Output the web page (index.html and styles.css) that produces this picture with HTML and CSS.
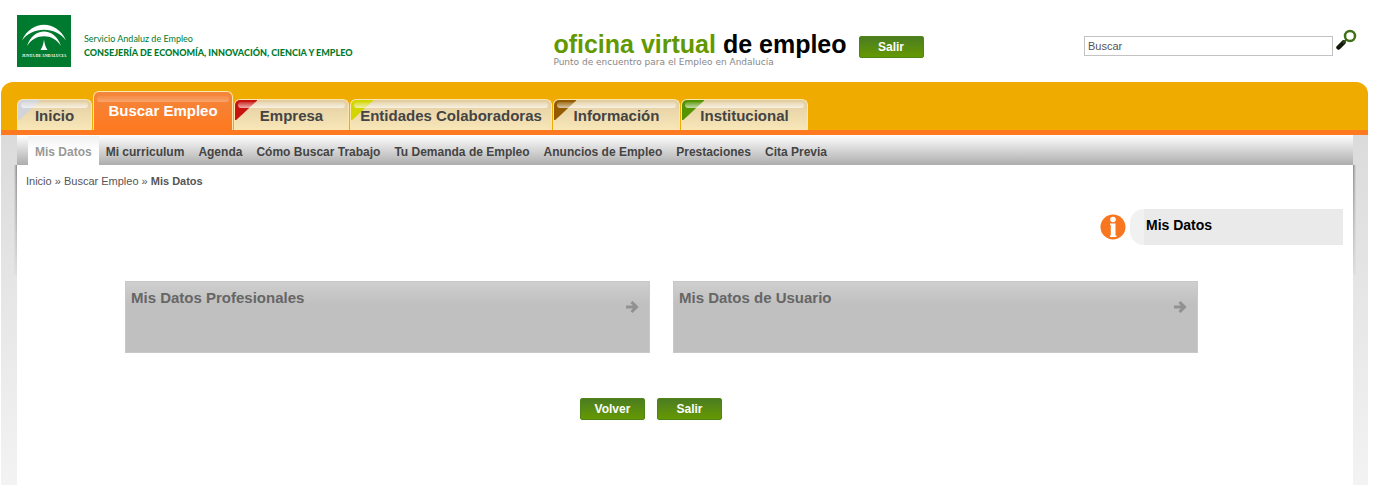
FILE: index.html
```html
<!DOCTYPE html>
<html lang="es">
<head>
  <meta charset="UTF-8" />
  <meta name="viewport" content="width=device-width, initial-scale=1.0"/>
  <title>Mis Datos - Oficina Virtual de Empleo</title>
  <link rel="stylesheet" href="styles.css">
</head>
<body>
  <!-- Header -->
  <header class="header">
    <a href="#" class="brand">
      <svg class="brand-logo" width="54" height="52" viewBox="0 0 54 52" aria-hidden="true">
        <rect width="54" height="52" fill="#007a2e"/>
        <path d="M5 25.500C14 4.500 40 4.500 49 25.500C39 11 15 11 5 25.500Z" fill="#fff"/>
        <path d="M10 31C16 11.500 38 11.500 44 31C36 18 18 18 10 31Z" fill="#fff"/>
        <path d="M27 24.500C27.500 29 28.500 32 30.500 35H23.500C25.500 32 26.500 29 27 24.500Z" fill="#fff"/>
        <text x="27" y="42" text-anchor="middle" class="brand-logo-text">JUNTA DE ANDALUCIA</text>
      </svg>
      <span class="brand-text">
        <span>Servicio Andaluz de Empleo</span>
        <strong>CONSEJERÍA DE ECONOMÍA, INNOVACIÓN, CIENCIA Y EMPLEO</strong>
      </span>
    </a>
    <div class="office">
      <div class="office-name">
        <h1><span>oficina virtual</span> de empleo</h1>
        <p>Punto de encuentro para el Empleo en Andalucía</p>
      </div>
      <button type="button" class="btn">Salir</button>
    </div>
    <form class="search">
      <input type="text" id="buscar" aria-label="Buscar" value="Buscar" />
      <button type="button" class="search-btn" aria-label="Buscar">
        <svg width="22" height="22" viewBox="0 0 22 22">
          <path d="M2.500 18.500L7.500 13.500" stroke="#111a08" stroke-width="4.500" stroke-linecap="round"/>
          <path d="M7 14L10.500 10.500" stroke="#33491c" stroke-width="2"/>
          <circle cx="14" cy="7" r="5" fill="#fff" stroke="#41701a" stroke-width="2.500"/>
        </svg>
      </button>
    </form>
  </header>

  <!-- Main tabs -->
  <nav class="tabs">
    <a href="#" class="tab tab-inicio">Inicio</a>
    <a href="#" class="tab tab-active">Buscar Empleo</a>
    <a href="#" class="tab tab-empresa">Empresa</a>
    <a href="#" class="tab tab-entidades">Entidades Colaboradoras</a>
    <a href="#" class="tab tab-informacion">Información</a>
    <a href="#" class="tab tab-institucional">Institucional</a>
  </nav>

  <div class="wrapper">
    <nav class="submenu">
      <a href="#" class="current">Mis Datos</a>
      <a href="#">Mi curriculum</a>
      <a href="#">Agenda</a>
      <a href="#">Cómo Buscar Trabajo</a>
      <a href="#">Tu Demanda de Empleo</a>
      <a href="#">Anuncios de Empleo</a>
      <a href="#">Prestaciones</a>
      <a href="#">Cita Previa</a>
    </nav>

    <!-- Content -->
    <main class="content">
      <p class="breadcrumb"><a href="#">Inicio</a> » <a href="#">Buscar Empleo</a> » <strong>Mis Datos</strong></p>

      <div class="page-title">
        <svg width="26" height="26" viewBox="0 0 26 26" aria-hidden="true">
          <circle cx="13" cy="13" r="12.500" fill="#f8761f"/>
          <circle cx="13" cy="5.500" r="2.800" fill="#fff"/>
          <path d="M10 9.500H15.500V21.500H16.500V23H10V21.500H10.800V11H10Z" fill="#fff"/>
        </svg>
        <h2>Mis Datos</h2>
      </div>

      <div class="panel">
        <div class="cards">
          <a href="#" class="card">
            <h3>Mis Datos Profesionales</h3>
            <svg width="14" height="14" viewBox="0 0 14 14" aria-hidden="true"><path d="M1 7H11M6.500 2L11.500 7L6.500 12"/></svg>
          </a>
          <a href="#" class="card">
            <h3>Mis Datos de Usuario</h3>
            <svg width="14" height="14" viewBox="0 0 14 14" aria-hidden="true"><path d="M1 7H11M6.500 2L11.500 7L6.500 12"/></svg>
          </a>
        </div>
        <div class="actions">
          <button type="button" class="btn">Volver</button>
          <button type="button" class="btn">Salir</button>
        </div>
      </div>
    </main>
  </div>
</body>
</html>
```
FILE: styles.css
```css
* {
  box-sizing: border-box;
}

body {
  margin: 0;
  padding: 0 14px 0 1px;
  min-height: 100vh;
  display: flex;
  flex-direction: column;
  font-family: "Liberation Sans", Arial, sans-serif;
  font-size: 11px;
  color: #555;
  background: #fff;
}

h1, h2, h3, p {
  margin: 0;
}

a {
  color: inherit;
  text-decoration: none;
}

/* Header */
.header {
  display: grid;
  grid-template-columns: 40% 1fr auto;
  align-items: start;
  height: 82px;
  padding: 15px 10px 0 16px;
}

.brand {
  display: flex;
  gap: 13px;
  color: #007a2e;
}

.brand-logo-text {
  font-family: "Liberation Serif", serif;
  font-size: 4px;
  font-weight: bold;
  fill: #fff;
}

.brand-text {
  display: flex;
  flex-direction: column;
  padding-top: 17px;
  font-family: Lato, sans-serif;
  font-size: 9px;
  line-height: 14px;
  white-space: nowrap;
}

.brand-text strong {
  font-weight: 900;
}

.office {
  display: flex;
  gap: 12px;
  padding-top: 16px;
}

.office-name h1 {
  font-size: 25px;
  line-height: 26px;
  color: #000;
  white-space: nowrap;
}

.office-name h1 span {
  color: #629800;
}

.office-name p {
  font-family: "DejaVu Sans", sans-serif;
  font-size: 9px;
  line-height: 11px;
  color: #888;
}

.btn {
  width: 65px;
  height: 22px;
  padding: 0;
  border: 1px solid #4f8516;
  border-radius: 2px;
  background: linear-gradient(#4b7d22, #659900);
  color: #fff;
  font: bold 12px "Liberation Sans", Arial, sans-serif;
  cursor: pointer;
}

.office .btn {
  margin-top: 5px;
}

.search {
  display: flex;
  gap: 3px;
  padding-top: 14px;
}

.search input {
  width: 249px;
  height: 20px;
  margin-top: 7px;
  padding: 0 3px;
  border: 1px solid #c3c3c3;
  font: 11px "Liberation Sans", Arial, sans-serif;
  color: #555;
}

.search-btn {
  width: 22px;
  height: 22px;
  padding: 0;
  border: 0;
  background: none;
  cursor: pointer;
}

/* Main tabs */
.tabs {
  display: flex;
  align-items: flex-end;
  gap: 1px;
  height: 53px;
  padding-left: 16px;
  background: #f0ab00;
  border-bottom: 5px solid #ff7920;
  border-radius: 12px 12px 0 0;
}

.tab {
  --corner: transparent;
  position: relative;
  z-index: 0;
  height: 31px;
  padding-top: 2px;
  border: 1px solid #fbe6ae;
  border-bottom: 0;
  border-radius: 6px 6px 0 0;
  background:
    linear-gradient(137deg, var(--corner) 15px, transparent 16px) 0 0 / 22px 20px no-repeat,
    linear-gradient(#e2cda2, #f8e7b8);
  color: #444;
  font-size: 15px;
  font-weight: bold;
  line-height: 27px;
  text-align: center;
  white-space: nowrap;
}

/* glossy highlight */
.tab::before {
  content: "";
  position: absolute;
  z-index: -1;
  top: 2px;
  left: 3px;
  right: 3px;
  height: 6px;
  border-radius: 3px;
  background: linear-gradient(#fff2, #fffa);
}

.tab-inicio {
  --corner: #d3d3da;
  width: 75px;
}

.tab-active {
  width: 140px;
  height: 39px;
  padding-top: 5px;
  background: linear-gradient(#f3863d, #ff7920);
  color: #fff;
}

.tab-active::before {
  top: 4px;
  background: linear-gradient(#fff1, #fff4);
}

.tab-empresa {
  --corner: #c9130e;
  width: 115px;
}

.tab-entidades {
  --corner: #d2d500;
  width: 202px;
}

.tab-informacion {
  --corner: #945b00;
  width: 127px;
}

.tab-institucional {
  --corner: #569300;
  width: 127px;
}

/* Grey side strips behind the content */
.wrapper {
  flex: 1;
  display: flex;
  flex-direction: column;
  padding: 0 15px 0 16px;
  background: linear-gradient(#dbdbdb, #f3f3f3);
}

.submenu {
  display: flex;
  height: 30px;
  padding: 1px 0 0 11px;
  background: linear-gradient(#fff, #adadad);
  font-size: 12px;
  font-weight: bold;
  line-height: 32px;
  color: #444;
  white-space: nowrap;
}

.submenu a {
  padding: 0 7px;
}

.submenu .current {
  background: linear-gradient(#f1f1f1, #fff 50%);
  color: #999;
}

.content {
  position: relative;
  flex: 1;
  padding: 9px 10px 40px 9px;
  background: #fff;
}

.content::before,
.content::after {
  content: "";
  position: absolute;
  top: 0;
  width: 3px;
  height: 110px;
}

.content::before {
  right: 100%;
  background: linear-gradient(transparent, #dfdfdf), linear-gradient(to left, #888, #dbdbdb);
}

.content::after {
  left: 100%;
  background: linear-gradient(transparent, #dfdfdf), linear-gradient(to right, #888, #dbdbdb);
}

.breadcrumb {
  line-height: 14px;
}

.page-title {
  display: flex;
  align-items: center;
  justify-content: flex-end;
  gap: 4px;
  margin-top: 21px;
}

.page-title h2 {
  width: 213px;
  height: 36px;
  padding-left: 16px;
  border-radius: 14px 0 0 14px;
  background: linear-gradient(to right, #f1f1f1 14px, #eaeaea 14px);
  color: #000;
  font-size: 14px;
  line-height: 33px;
}

.panel {
  padding: 36px 145px 0 99px;
}

.cards {
  display: grid;
  grid-template-columns: 1fr 1fr;
  gap: 23px;
}

.card {
  display: flex;
  justify-content: space-between;
  height: 72px;
  padding: 7px 10px 0 5px;
  border: 1px solid #c8c8c8;
  background: linear-gradient(#cfcfcf, #c0c0c0 22px);
}

.card h3 {
  color: #666;
  font-size: 15px;
  line-height: 18px;
}

.card svg {
  margin-top: 11px;
  fill: none;
  stroke: #919191;
  stroke-width: 3;
}

.actions {
  display: flex;
  justify-content: center;
  gap: 12px;
  padding: 45px 21px 0 0;
}
```
